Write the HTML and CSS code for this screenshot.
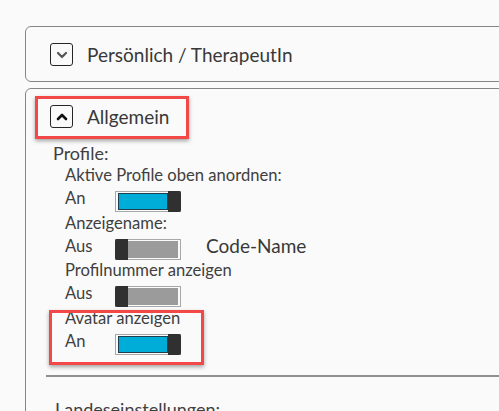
FILE: index.html
```html
<!DOCTYPE html>
<html lang="de">
<head>
<meta charset="utf-8">
<title>Einstellungen</title>
<link rel="stylesheet" href="styles.css">
</head>
<body>
<div class="page">
  <section class="panel">
    <div class="head">
      <span class="chev chev-down">
        <svg width="12" height="8" viewBox="0 0 12 8"><path d="M2 2 L6 6 L10 2" fill="none" stroke="#555" stroke-width="2.2" stroke-linecap="round" stroke-linejoin="round"/></svg>
      </span>
      <span class="title">Persönlich / TherapeutIn</span>
    </div>
  </section>
  <section class="panel panel-open">
    <div class="head marked">
      <span class="chev">
        <svg width="12" height="8" viewBox="0 0 12 8"><path d="M2 6 L6 2 L10 6" fill="none" stroke="#111" stroke-width="2.6" stroke-linecap="round" stroke-linejoin="round"/></svg>
      </span>
      <span class="title">Allgemein</span>
    </div>
    <div class="group">
      <div class="group-title">Profile:</div>
      <div class="item">
        <div class="label">Aktive Profile oben anordnen:</div>
        <div class="row">
          <span class="state">An</span>
          <span class="toggle on"><span class="track"></span><span class="knob"></span></span>
        </div>
      </div>
      <div class="item">
        <div class="label">Anzeigename:</div>
        <div class="row">
          <span class="state">Aus</span>
          <span class="toggle off"><span class="knob"></span><span class="track"></span></span>
          <span class="extra">Code-Name</span>
        </div>
      </div>
      <div class="item">
        <div class="label">Profilnummer anzeigen</div>
        <div class="row">
          <span class="state">Aus</span>
          <span class="toggle off"><span class="knob"></span><span class="track"></span></span>
        </div>
      </div>
      <div class="item item-marked">
        <div class="label">Avatar anzeigen</div>
        <div class="row">
          <span class="state">An</span>
          <span class="toggle on"><span class="track"></span><span class="knob"></span></span>
        </div>
      </div>
    </div>
    <div class="sep"></div>
    <div class="group-title group-title-2">Landeseinstellungen:</div>
  </section>
</div>
</body>
</html>
```
FILE: styles.css
```css
html, body {
  margin: 0;
  padding: 0;
  background: #fafafa;
  overflow: hidden;
  height: 100%;
}
body {
  font-family: "Lato", "Liberation Sans", sans-serif;
  color: #3a3a3a;
}
.page {
  padding: 26px 0 0 25px;
  width: 520px;
}
.panel {
  border: 1px solid #858585;
  border-radius: 6px;
  padding: 16px 0 15px 24px;
}
.panel-open {
  margin-top: 6px;
  padding-bottom: 40px;
}
.head {
  display: flex;
  align-items: center;
  height: 23px;
  position: relative;
  width: max-content;
}
.marked::before {
  content: "";
  position: absolute;
  left: -15px;
  top: -9px;
  width: 148px;
  height: 37px;
  border: 3px solid #f24848;
  box-shadow: 0 2px 4px rgba(0,0,0,0.35);
}
.chev {
  width: 23px;
  height: 23px;
  box-sizing: border-box;
  border: 1.5px solid #262626;
  border-radius: 3px;
  display: flex;
  align-items: center;
  justify-content: center;
}
.title {
  margin-left: 14px;
  font-size: 19px;
  color: #383838;
  line-height: 23px;
}
.group {
  margin-top: 14px;
}
.group-title {
  font-size: 18px;
  line-height: 22px;
  margin-left: 3px;
  color: #404040;
}
.item {
  margin-left: 15px;
  position: relative;
}
.item + .item {
  margin-top: 0.5px;
}
.item-marked::before {
  content: "";
  position: absolute;
  left: -16px;
  top: 3px;
  width: 149px;
  height: 49px;
  border: 3px solid #f24848;
  box-shadow: 0 2px 4px rgba(0,0,0,0.35);
}
.label {
  font-size: 16.6px;
  line-height: 22px;
  color: #404040;
}
.row {
  display: flex;
  align-items: flex-start;
  height: 25px;
}
.state {
  width: 50px;
  font-size: 16.6px;
  line-height: 22px;
  margin-top: 1px;
  color: #404040;
}
.toggle {
  margin-top: 5px;
  width: 66px;
  height: 21px;
  box-sizing: border-box;
  border: 1px solid #a8a8a8;
  display: flex;
}
.toggle .knob {
  width: 13px;
  background: #303030;
  margin: -1px -1px -1px 0;
  border-radius: 0 2px 2px 0;
}
.toggle.off .knob {
  margin: -1px 0 -1px -1px;
  border-radius: 2px 0 0 2px;
}
.toggle.on .track {
  flex: 1;
  margin: 1px 0 1px 2px;
  background: #00acd8;
  border: 1px solid #1f3f4f;
}
.toggle.off .track {
  flex: 1;
  margin: 1px 2px 1px 0;
  background: #9b9b9b;
}
.extra {
  margin-left: 25px;
  margin-top: 1px;
  font-size: 19px;
  line-height: 22px;
  color: #383838;
}
.sep {
  margin: 21px 0 0 -4px;
  border-top: 2px solid #8f8f8f;
}
.group-title-2 {
  margin-top: 21px;
  margin-left: 5px;
}
```
